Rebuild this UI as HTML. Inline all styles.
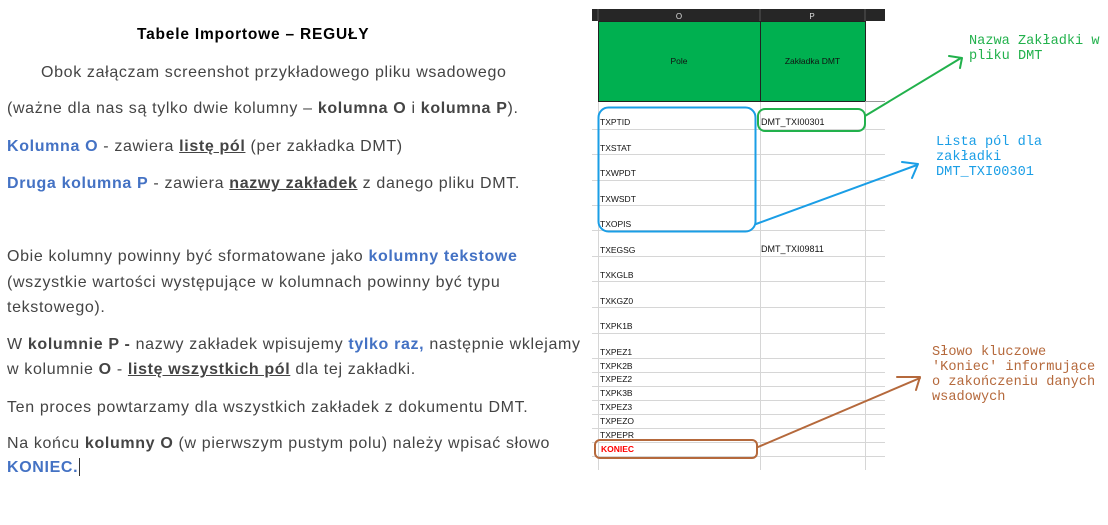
<!DOCTYPE html>
<html><head><meta charset="utf-8"><style>
*{margin:0;padding:0}
body{width:1108px;height:525px;background:#fff;position:relative;overflow:hidden;font-family:"Liberation Sans",Arial,sans-serif}
.l{position:absolute;white-space:nowrap;font-size:16px;letter-spacing:0.65px;color:#444;line-height:20px}
.b{font-weight:bold}
.bl{color:#4472c4;font-weight:bold}
.u{text-decoration:underline}
.c{position:absolute;font-size:8.5px;color:#111;white-space:nowrap;line-height:10px}
.m{position:absolute;font-family:"Liberation Mono","Courier New",monospace;font-size:13.6px;line-height:15px;white-space:pre}
</style></head><body>
<div class="l b" style="left:137px;top:25px;color:#000;font-size:15.5px;letter-spacing:0.8px">Tabele Importowe – REGUŁY</div>
<div class="l" style="left:41px;top:63px">Obok załączam screenshot przykładowego pliku wsadowego</div>
<div class="l" style="left:7px;top:99px">(ważne dla nas są tylko dwie kolumny – <span class="b">kolumna O</span> i <span class="b">kolumna P</span>).</div>
<div class="l" style="left:7px;top:137px"><span class="bl">Kolumna O</span> - zawiera <span class="b u">listę pól</span> (per zakładka DMT)</div>
<div class="l" style="left:7px;top:174px"><span class="bl">Druga kolumna P</span> - zawiera <span class="b u">nazwy zakładek</span> z danego pliku DMT.</div>
<div class="l" style="left:7px;top:247px">Obie kolumny powinny być sformatowane jako <span class="bl">kolumny tekstowe</span></div>
<div class="l" style="left:7px;top:273px">(wszystkie wartości występujące w kolumnach powinny być typu</div>
<div class="l" style="left:7px;top:298px">tekstowego).</div>
<div class="l" style="left:7px;top:335px">W <span class="b">kolumnie P -</span> nazwy zakładek wpisujemy <span class="bl">tylko raz,</span> następnie wklejamy</div>
<div class="l" style="left:7px;top:360px">w kolumnie <span class="b">O</span> - <span class="b u">listę wszystkich pól</span> dla tej zakładki.</div>
<div class="l" style="left:7px;top:398px">Ten proces powtarzamy dla wszystkich zakładek z dokumentu DMT.</div>
<div class="l" style="left:7px;top:434px">Na końcu <span class="b">kolumny O</span> (w pierwszym pustym polu) należy wpisać słowo</div>
<div class="l" style="left:7px;top:458px"><span class="bl">KONIEC.</span><span style="display:inline-block;width:1px;height:18px;background:#333;vertical-align:-4px;margin-left:1px"></span></div>

<svg style="position:absolute;left:0;top:0" width="1108" height="525">
<rect x="592" y="9" width="293" height="12" fill="#262626"/>
<line x1="598" y1="9" x2="598" y2="21" stroke="#555"/>
<line x1="760" y1="9" x2="760" y2="21" stroke="#555"/>
<line x1="865" y1="9" x2="865" y2="21" stroke="#555"/>
<text x="679" y="19" font-size="8" fill="#ddd" text-anchor="middle" font-family="Liberation Sans">O</text>
<text x="812" y="19" font-size="8" fill="#ddd" text-anchor="middle" font-family="Liberation Sans">P</text>
<rect x="598.5" y="21.5" width="162" height="80" fill="#00b050" stroke="#222"/>
<rect x="760.5" y="21.5" width="105" height="80" fill="#00b050" stroke="#222"/>
<line x1="865" y1="101.5" x2="885" y2="101.5" stroke="#999"/>
<g stroke="#d6d6d6" stroke-width="1">
<line x1="598.5" y1="102" x2="598.5" y2="470"/>
<line x1="760.5" y1="102" x2="760.5" y2="470"/>
<line x1="865.5" y1="102" x2="865.5" y2="470"/>
<line x1="592" y1="129.5" x2="885" y2="129.5"/>
<line x1="592" y1="154.5" x2="885" y2="154.5"/>
<line x1="592" y1="180.5" x2="885" y2="180.5"/>
<line x1="592" y1="205.5" x2="885" y2="205.5"/>
<line x1="592" y1="230.5" x2="885" y2="230.5"/>
<line x1="592" y1="256.5" x2="885" y2="256.5"/>
<line x1="592" y1="281.5" x2="885" y2="281.5"/>
<line x1="592" y1="307.5" x2="885" y2="307.5"/>
<line x1="592" y1="333.5" x2="885" y2="333.5"/>
<line x1="592" y1="358.5" x2="885" y2="358.5"/>
<line x1="592" y1="372.5" x2="885" y2="372.5"/>
<line x1="592" y1="386.5" x2="885" y2="386.5"/>
<line x1="592" y1="400.5" x2="885" y2="400.5"/>
<line x1="592" y1="414.5" x2="885" y2="414.5"/>
<line x1="592" y1="428.5" x2="885" y2="428.5"/>
<line x1="592" y1="442.5" x2="885" y2="442.5"/>
<line x1="592" y1="456.5" x2="885" y2="456.5"/>
</g>
<rect x="598.5" y="107.5" width="157" height="124" rx="10" fill="none" stroke="#1a9ee6" stroke-width="2"/>
<rect x="758" y="109" width="107" height="22" rx="7" fill="none" stroke="#22b14c" stroke-width="2"/>
<rect x="595" y="440" width="162" height="18" rx="5" fill="none" stroke="#b5693c" stroke-width="2"/>
<g fill="none" stroke-width="2" stroke-linecap="round" stroke-linejoin="round">
<path d="M865 116 L961 58 M949 56 L962 58 L960 68" stroke="#22b14c"/>
<path d="M756 224 L917 165 M902 162 L918 164 L912 178" stroke="#1a9ee6"/>
<path d="M758 447 L920 378 M897 377 L920 377 L916 390" stroke="#b5693c"/>
</g>
</svg>
<div class="c" style="left:598px;top:56px;width:162px;text-align:center">Pole</div>
<div class="c" style="left:760px;top:56px;width:105px;text-align:center">Zakładka DMT</div>
<div class="c" style="left:761px;top:117px;font-size:9px">DMT_TXI00301</div>
<div class="c" style="left:761px;top:244px;font-size:9px">DMT_TXI09811</div>
<div class="c" style="left:600px;top:117px">TXPTID</div>
<div class="c" style="left:600px;top:143px">TXSTAT</div>
<div class="c" style="left:600px;top:168px">TXWPDT</div>
<div class="c" style="left:600px;top:194px">TXWSDT</div>
<div class="c" style="left:600px;top:219px">TXOPIS</div>
<div class="c" style="left:600px;top:245px">TXEGSG</div>
<div class="c" style="left:600px;top:270px">TXKGLB</div>
<div class="c" style="left:600px;top:296px">TXKGZ0</div>
<div class="c" style="left:600px;top:321px">TXPK1B</div>
<div class="c" style="left:600px;top:347px">TXPEZ1</div>
<div class="c" style="left:600px;top:361px">TXPK2B</div>
<div class="c" style="left:600px;top:374px">TXPEZ2</div>
<div class="c" style="left:600px;top:388px">TXPK3B</div>
<div class="c" style="left:600px;top:402px">TXPEZ3</div>
<div class="c" style="left:600px;top:416px">TXPEZO</div>
<div class="c" style="left:600px;top:430px">TXPEPR</div>
<div class="c" style="left:601px;top:444px;color:#f00;font-weight:bold">KONIEC</div>
<div class="m" style="left:969px;top:34px;color:#22b14c">Nazwa Zakładki w
pliku DMT</div>
<div class="m" style="left:936px;top:135px;color:#1a9ee6">Lista pól dla
zakładki
DMT_TXI00301</div>
<div class="m" style="left:932px;top:345px;color:#b5693c">Słowo kluczowe
'Koniec' informujące
o zakończeniu danych
wsadowych</div>
</body></html>
